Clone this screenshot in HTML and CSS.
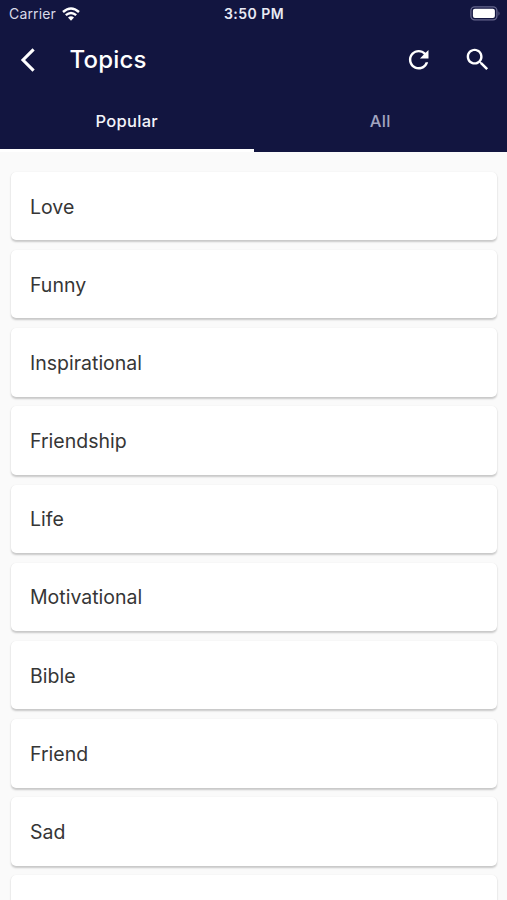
FILE: index.html
```html
<!DOCTYPE html>
<html lang="en">
<head>
<meta charset="utf-8">
<title>Topics</title>
<link rel="stylesheet" href="styles.css">
</head>
<body>
<header class="header">
  <div class="status">
    <div class="carrier">
      <span>Carrier</span>
      <svg class="wifi" viewBox="0 0 18 14"><path d="M1 5Q9-2.2 17 5M3.8 8.2Q9 3.6 14.2 8.2" fill="none" stroke="#fff" stroke-width="2.4"/><path d="M6 10.5Q9 8.1 12 10.5L9 13.8z" fill="#fff"/></svg>
    </div>
    <span class="time">3:50 PM</span>
    <svg class="battery" viewBox="0 0 31 15"><rect x=".9" y=".9" width="26" height="13" rx="3.8" fill="none" stroke="#66678d" stroke-width="1.3"/><rect x="2.9" y="2.7" width="22" height="9.4" rx="2" fill="#fff"/><path d="M28.5 5.2q2 2.2 0 4.6z" fill="#66678d"/></svg>
  </div>
  <div class="toolbar">
    <svg class="back" viewBox="0 0 16 26"><path d="M13.6 2.4L3 13l10.6 10.6" fill="none" stroke="#fff" stroke-width="3.1"/></svg>
    <h1 class="title">Topics</h1>
    <svg class="icon" viewBox="0 0 24 24"><path d="M17.65 6.35C16.2 4.9 14.21 4 12 4c-4.42 0-7.99 3.58-7.99 8s3.57 8 7.99 8c3.73 0 6.84-2.55 7.73-6h-2.08c-.82 2.33-3.04 4-5.65 4-3.31 0-6-2.69-6-6s2.69-6 6-6c1.66 0 3.14.69 4.22 1.78L13 11h7V4l-2.35 2.35z"/></svg>
    <svg class="icon" viewBox="0 0 24 24"><path d="M15.5 14h-.79l-.28-.27C15.41 12.59 16 11.11 16 9.5 16 5.91 13.09 3 9.5 3S3 5.91 3 9.5 5.91 16 9.5 16c1.61 0 3.09-.59 4.23-1.57l.27.28v.79l5 4.99L20.49 19l-4.99-5zm-6 0C7.01 14 5 11.99 5 9.5S7.01 5 9.5 5 14 7.01 14 9.5 11.99 14 9.5 14z"/></svg>
  </div>
  <nav class="tabs">
    <div class="tab active">Popular</div>
    <div class="tab">All</div>
  </nav>
</header>
<main class="list">
  <div class="card">Love</div>
  <div class="card">Funny</div>
  <div class="card">Inspirational</div>
  <div class="card">Friendship</div>
  <div class="card">Life</div>
  <div class="card">Motivational</div>
  <div class="card">Bible</div>
  <div class="card">Friend</div>
  <div class="card">Sad</div>
  <div class="card"></div>
</main>
</body>
</html>
```
FILE: styles.css
```css
* { box-sizing: border-box; }
body {
  margin: 0;
  height: 900px;
  overflow: hidden;
  background: #fafafa;
  color: #363636;
  font-family: Inter, "Liberation Sans", sans-serif;
}
svg { display: block; flex: none; }
.header { height: 152.4px; background: #121540; color: #fff; }
.status {
  display: grid;
  grid-template-columns: 1fr auto 1fr;
  align-items: center;
  height: 27px;
  padding: 0 6px 0 9px;
}
.carrier { display: flex; align-items: center; gap: 6px; font-size: 14px; color: #d9dae8; letter-spacing: .15px; }
.wifi { width: 18px; height: 14px; }
.time { margin: 0 1px 0 -1px; font-size: 14px; font-weight: 600; letter-spacing: .45px; color: #e9eaf4; }
.battery { width: 31px; height: 15px; justify-self: end; }
.toolbar { display: flex; align-items: center; height: 66px; padding: 0 15px 0 20px; }
.back { width: 16px; height: 26px; }
.title { flex: 1; margin: 0 0 0 33.5px; font-size: 24px; line-height: 30px; font-weight: 450; letter-spacing: .2px; }
.icon { width: 29.4px; height: 29.4px; margin-left: 29px; fill: #fff; }
.tabs { display: flex; height: 59.4px; font-size: 16.5px; letter-spacing: .3px; }
.tab { flex: 1; padding-top: 18px; line-height: 21px; text-align: center; color: #a3a5c0; font-weight: 450; }
.active { color: #f2f3fa; border-bottom: 3px solid #fff; font-weight: 500; }
.list { display: flex; flex-direction: column; gap: 9.7px; padding: 19.4px 10px 0 11px; }
.card {
  display: flex;
  align-items: center;
  flex: none;
  height: 68.5px;
  padding: 1px 0 0 19px;
  border-radius: 5px;
  background: #fff;
  box-shadow: 0 1.5px 2px rgba(0, 0, 0, .2), 0 0 1px rgba(0, 0, 0, .04);
  font-size: 19.5px;
}
```
